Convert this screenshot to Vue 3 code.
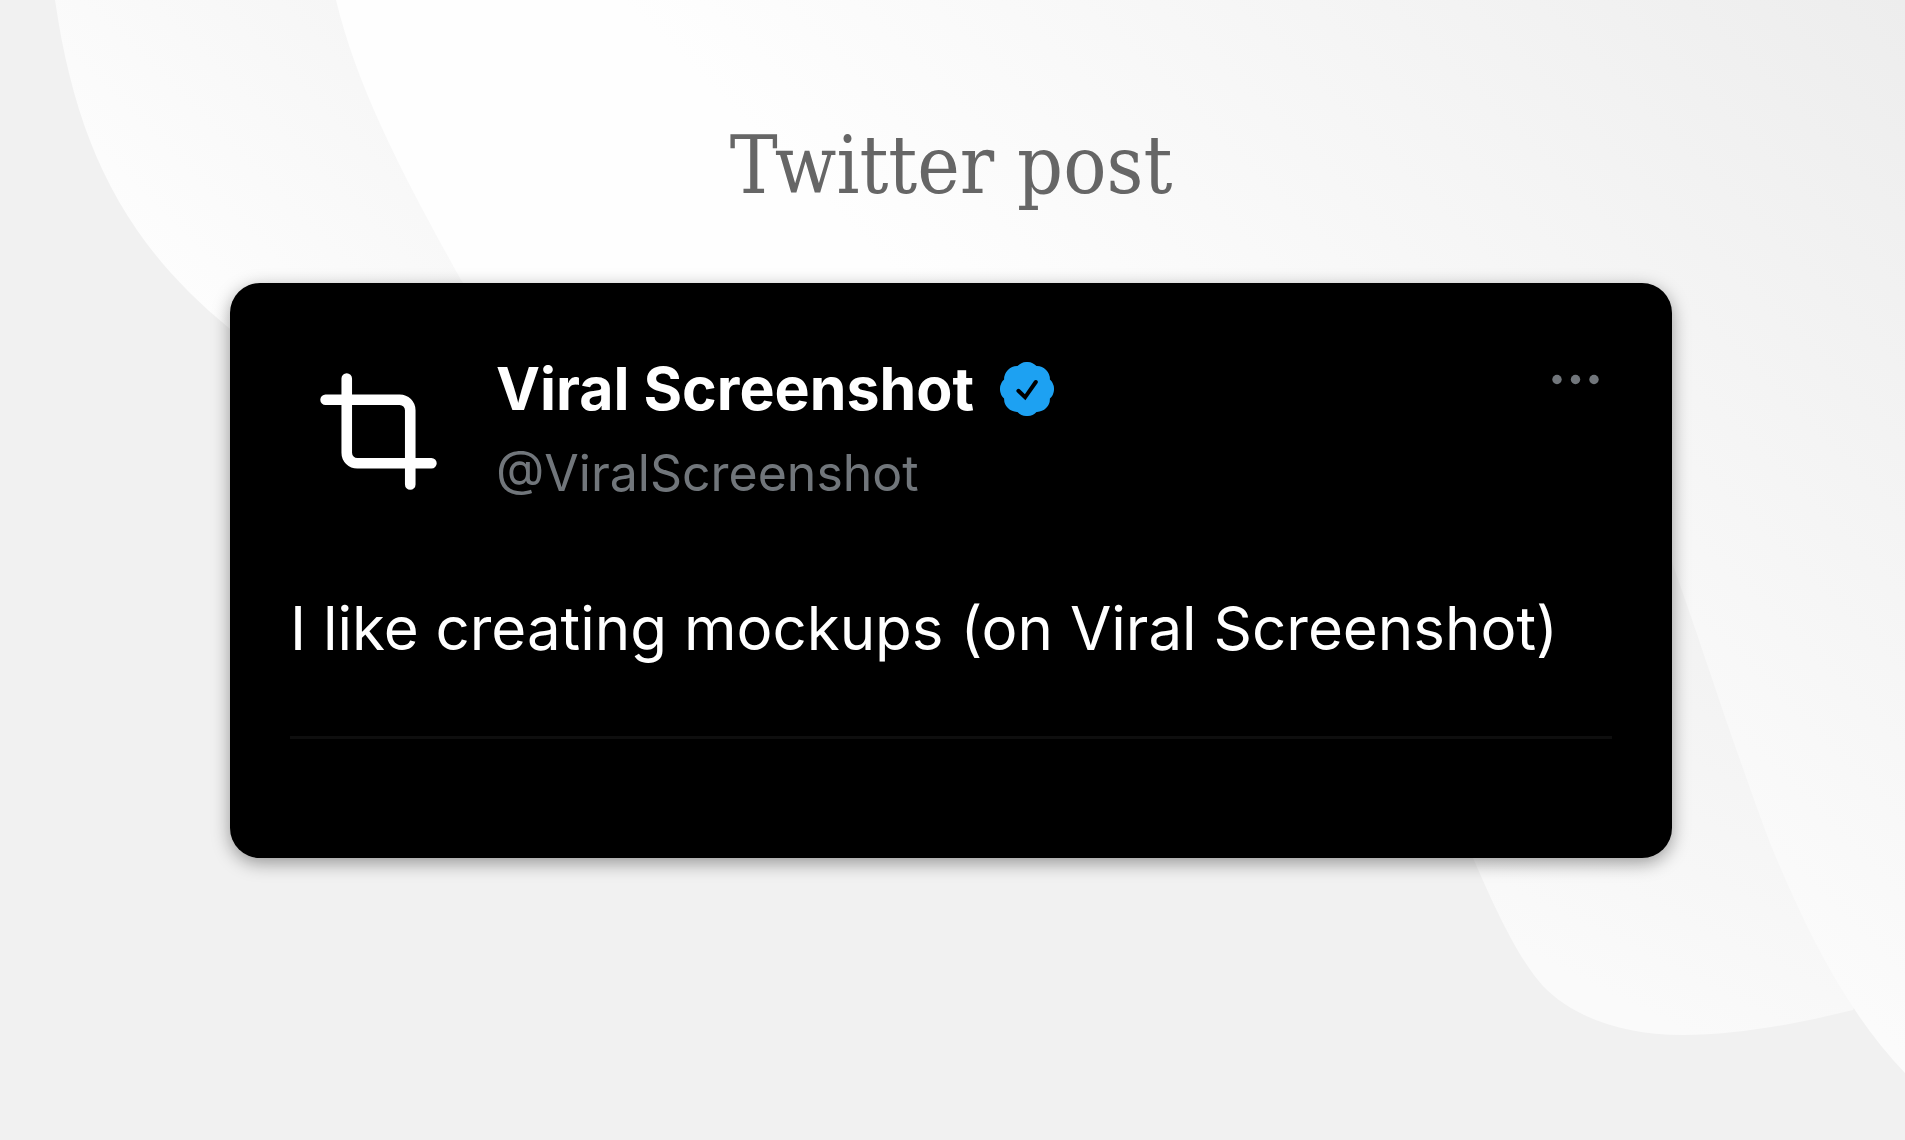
<script setup>
import { ref } from 'vue'

const titulo = ref('Twitter post')

const post = ref({
    nombre: 'Viral Screenshot',
    usuario: '@ViralScreenshot',
    texto: 'I like creating mockups (on Viral Screenshot)',
    verificado: true
})
</script>

<template>
    <main class="pagina">
        <!-- Fondo: tres bandas curvas con degradado -->
        <svg class="fondo" viewBox="0 0 1905 1140" preserveAspectRatio="none" aria-hidden="true">
            <defs>
                <linearGradient id="banda-izq" gradientUnits="userSpaceOnUse" x1="110" y1="230" x2="340" y2="0">
                    <stop offset="0" stop-color="#fdfdfd" />
                    <stop offset="1" stop-color="#f6f6f6" />
                </linearGradient>
                <linearGradient id="banda-inf" gradientUnits="userSpaceOnUse" x1="1580" y1="980" x2="1754" y2="632">
                    <stop offset="0" stop-color="#fafafa" />
                    <stop offset="1" stop-color="#f2f2f2" />
                </linearGradient>
                <linearGradient id="banda-sup" gradientUnits="userSpaceOnUse" x1="1262" y1="642" x2="1905" y2="0">
                    <stop offset="0" stop-color="#fefefe" />
                    <stop offset="1" stop-color="#ededed" />
                </linearGradient>
            </defs>
            <path fill="url(#banda-izq)" d="M55 0C76 145 124 242 229 328C320 400 420 420 520 420L520 0Z" />
            <path fill="url(#banda-inf)"
                d="M1400 640C1430 740 1450 810 1473 858C1500 920 1520 960 1543 986C1572 1016 1620 1035 1683 1035C1740 1035 1800 1023 1853 1010L1905 900L1700 500Z" />
            <path fill="url(#banda-sup)"
                d="M336 0C358 92 408 184 461 280C640 540 1300 330 1600 450C1640 470 1655 510 1673 565C1705 655 1728 730 1770 843C1806 930 1845 1010 1905 1073V0Z" />
        </svg>

        <h1 class="titulo">{{ titulo }}</h1>

        <article class="tarjeta">
            <header class="cabecera">
                <div class="avatar">
                    <svg viewBox="0 0 24 24" fill="none" stroke="currentColor" stroke-width="2" stroke-linecap="round"
                        stroke-linejoin="round" aria-hidden="true">
                        <path d="M6 2v14a2 2 0 0 0 2 2h14" />
                        <path d="M18 22V8a2 2 0 0 0-2-2H2" />
                    </svg>
                </div>

                <div class="autor">
                    <div class="autor-nombre">
                        <strong>{{ post.nombre }}</strong>
                        <svg v-if="post.verificado" class="insignia" viewBox="-27 -27 54 54" aria-hidden="true">
                            <path fill="#1da1f2"
                                d="M-9.5 -22.9A13 13 0 0 1 9.5 -22.9A13 13 0 0 1 22.9 -9.5A13 13 0 0 1 22.9 9.5A13 13 0 0 1 9.5 22.9A13 13 0 0 1 -9.5 22.9A13 13 0 0 1 -22.9 9.5A13 13 0 0 1 -22.9 -9.5A13 13 0 0 1 -9.5 -22.9Z" />
                            <path d="M-8.6 1.8L-1.9 8.3L8.8 -7" fill="none" stroke="#000" stroke-width="4"
                                stroke-linecap="round" />
                        </svg>
                    </div>
                    <span class="usuario">{{ post.usuario }}</span>
                </div>

                <button type="button" class="btn-menu" aria-label="Más opciones">
                    <svg viewBox="0 0 74 74" fill="currentColor" aria-hidden="true">
                        <circle cx="19" cy="36.5" r="4.7" />
                        <circle cx="37.5" cy="36.5" r="4.7" />
                        <circle cx="56" cy="36.5" r="4.7" />
                    </svg>
                </button>
            </header>

            <p class="texto">{{ post.texto }}</p>
            <hr class="separador">
        </article>
    </main>
</template>

<style>
body {
    margin: 0;
    background: #f1f1f1;
}
</style>

<style scoped>
.pagina {
    position: relative;
    box-sizing: border-box;
    min-height: 100vh;
    padding: 116px 233px 120px 230px;
    overflow: hidden;
    font-family: Inter, "Liberation Sans", sans-serif;
}

.fondo {
    position: absolute;
    inset: 0;
    width: 100%;
    height: 100%;
}

.titulo {
    position: relative;
    margin: 0 0 67px;
    font-family: "DejaVu Serif Condensed", "DejaVu Serif", serif;
    font-size: 80px;
    font-weight: 400;
    line-height: 100px;
    text-align: center;
    color: #666;
}

.tarjeta {
    position: relative;
    padding: 60px 60px 119px;
    border-radius: 30px;
    background: #000;
    color: #fff;
    box-shadow: 0 5px 18px rgba(0, 0, 0, 0.38);
}

.cabecera {
    display: flex;
    align-items: flex-start;
    gap: 30px;
}

.avatar {
    display: flex;
    align-items: center;
    justify-content: center;
    flex: none;
    width: 176px;
    height: 176px;
    border-radius: 50%;
}

.avatar svg {
    width: 127px;
    height: 127px;
}

.autor {
    flex: 1;
    padding-top: 16px;
    line-height: 60px;
    white-space: nowrap;
}

.autor-nombre {
    display: flex;
    align-items: center;
    gap: 26px;
    margin-bottom: 24px;
    font-size: 59px;
}

.autor-nombre strong {
    font-weight: 700;
}

.insignia {
    width: 54px;
    height: 54px;
}

.usuario {
    display: block;
    font-size: 50px;
    color: #71767b;
}

.btn-menu {
    width: 74px;
    height: 74px;
    padding: 0;
    border: none;
    background: none;
    color: #71767b;
    cursor: pointer;
}

.btn-menu svg {
    display: block;
}

.texto {
    margin: 71px 0 70px;
    font-size: 60px;
    line-height: 76px;
}

.separador {
    height: 3px;
    margin: 0;
    border: none;
    background: #0e0e0e;
}
</style>
